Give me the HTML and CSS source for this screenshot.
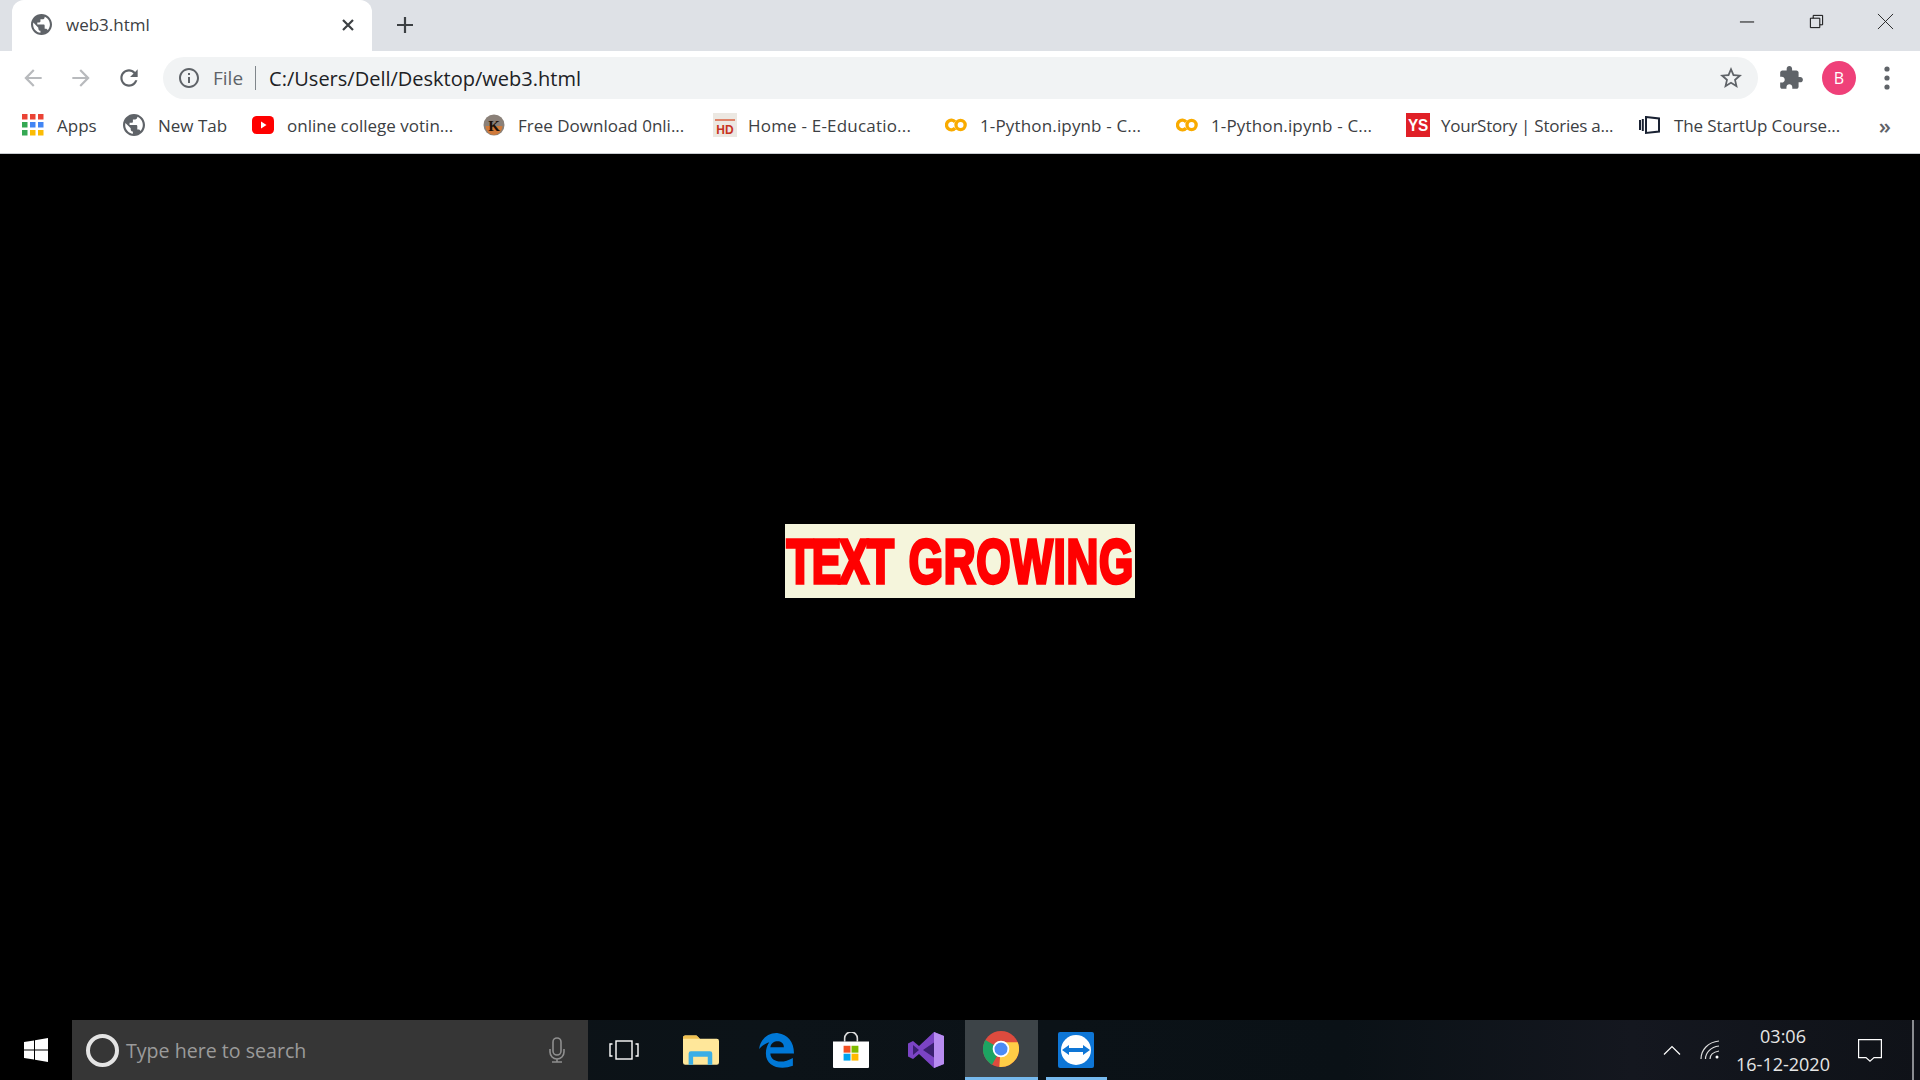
FILE: index.html
```html
<!DOCTYPE html>
<html lang="en">
<head>
    <meta charset="UTF-8">
    <title>web3.html</title>
    <link rel="stylesheet" href="styles.css">
</head>
<body>
    <svg class="defs" width="0" height="0">
        <symbol id="globe" viewBox="2 2 20 20"><path d="M12 2C6.48 2 2 6.48 2 12s4.48 10 10 10 10-4.48 10-10S17.52 2 12 2zm-1 17.93c-3.95-.49-7-3.85-7-7.93 0-.62.08-1.21.21-1.79L9 15v1c0 1.1.9 2 2 2v1.93zm6.9-2.54c-.26-.81-1-1.39-1.9-1.39h-1v-3c0-.55-.45-1-1-1H8v-2h2c.55 0 1-.45 1-1V7h2c1.1 0 2-.9 2-2v-.41c2.93 1.19 5 4.06 5 7.41 0 2.08-.8 3.97-2.1 5.39z"/></symbol>
        <symbol id="colab" viewBox="0 0 24 14"><path d="M11 3.600A5.300 5.300 0 1 0 11 10.400" fill="none" stroke="#f9ab00" stroke-width="3.600"/><circle cx="17" cy="7" r="5" fill="none" stroke="#f9ab00" stroke-width="3.600"/></symbol>
    </svg>

    <div class="tabstrip">
        <div class="tab">
            <svg class="tab-favicon" fill="#5f6368"><use href="#globe"/></svg>
            <span class="tab-title">web3.html</span>
            <svg class="tab-close" viewBox="0 0 14 14" stroke="#3c4043" stroke-width="2.2"><path d="M2 2l10 10M12 2L2 12"/></svg>
        </div>
        <svg class="newtab" viewBox="0 0 18 18" stroke="#3c4043" stroke-width="2.2"><path d="M9 1v16M1 9h16"/></svg>
        <div class="winbtns">
            <svg class="winbtn" viewBox="0 0 18 18" stroke="#000" fill="none"><path d="M1 9.5h15"/></svg>
            <svg class="winbtn" viewBox="0 0 18 18" stroke="#000" fill="none"><path d="M2.500 5.500h10v10h-10zM5.500 5.500V2.500h10v10h-3"/></svg>
            <svg class="winbtn" viewBox="0 0 18 18" stroke="#222" fill="none"><path d="M1 1l16 16M17 1L1 17"/></svg>
        </div>
    </div>

    <div class="toolbar">
        <div class="toolbtn">
            <svg class="navicon" viewBox="0 0 24 24" fill="#b8babd"><path d="M20 11H7.830l5.590-5.590L12 4l-8 8 8 8 1.410-1.410L7.830 13H20v-2z"/></svg>
        </div>
        <div class="toolbtn">
            <svg class="navicon flip" viewBox="0 0 24 24" fill="#b8babd"><path d="M20 11H7.830l5.590-5.590L12 4l-8 8 8 8 1.410-1.410L7.830 13H20v-2z"/></svg>
        </div>
        <div class="toolbtn">
            <svg class="navicon" viewBox="0 0 24 24" fill="#5f6368"><path d="M17.650 6.350C16.200 4.900 14.210 4 12 4c-4.420 0-7.990 3.580-7.990 8s3.570 8 7.990 8c3.730 0 6.840-2.550 7.730-6h-2.080c-.82 2.330-3.040 4-5.650 4-3.310 0-6-2.690-6-6s2.690-6 6-6c1.660 0 3.140.69 4.220 1.780L13 11h7V4l-2.350 2.350z"/></svg>
        </div>
        <div class="omnibox">
            <svg class="omni-info" viewBox="2 2 20 20" fill="#5f6368"><path d="M11 7h2v2h-2zm0 4h2v6h-2zm1-9C6.480 2 2 6.480 2 12s4.480 10 10 10 10-4.480 10-10S17.520 2 12 2zm0 18c-4.410 0-8-3.590-8-8s3.590-8 8-8 8 3.590 8 8-3.590 8-8 8z"/></svg>
            <span class="omni-file">File</span>
            <span class="omni-sep"></span>
            <span class="omni-url">C:/Users/Dell/Desktop/web3.html</span>
            <svg class="omni-star" viewBox="2 2 20 20" fill="#5f6368"><path d="M22 9.240l-7.190-.62L12 2 9.190 8.630 2 9.240l5.460 4.730L5.820 21 12 17.270 18.180 21l-1.630-7.030L22 9.240zM12 15.400l-3.760 2.270 1-4.280-3.320-2.880 4.380-.38L12 6.100l1.710 4.040 4.380.38-3.320 2.880 1 4.280L12 15.400z"/></svg>
        </div>
        <div class="toolbtn">
            <svg class="navicon" viewBox="0 0 24 24" fill="#5f6368"><path d="M20.500 11H19V7c0-1.100-.9-2-2-2h-4V3.500C13 2.120 11.880 1 10.500 1S8 2.120 8 3.500V5H4c-1.100 0-1.990.9-1.990 2v3.800H3.500c1.490 0 2.700 1.210 2.700 2.700s-1.210 2.700-2.700 2.700H2V20c0 1.100.9 2 2 2h3.800v-1.500c0-1.490 1.210-2.700 2.700-2.700 1.490 0 2.700 1.210 2.700 2.700V22H17c1.100 0 2-.9 2-2v-4h1.500c1.380 0 2.500-1.120 2.500-2.500S21.880 11 20.500 11z"/></svg>
        </div>
        <div class="toolbtn"><span class="avatar">B</span></div>
        <div class="toolbtn">
            <svg class="dots" viewBox="0 0 6 24" fill="#5f6368"><circle cx="3" cy="3" r="2.600"/><circle cx="3" cy="12" r="2.600"/><circle cx="3" cy="21" r="2.600"/></svg>
        </div>
    </div>

    <div class="bookmarks">
        <div class="bm bm-apps">
            <svg class="bm-icon" viewBox="0 0 22 22">
                <rect x="0" y="0" width="5.500" height="5.500" fill="#ea4335"/><rect x="8" y="0" width="5.500" height="5.500" fill="#ea4335"/><rect x="16" y="0" width="5.500" height="5.500" fill="#ea4335"/>
                <rect x="0" y="8" width="5.500" height="5.500" fill="#34a853"/><rect x="8" y="8" width="5.500" height="5.500" fill="#4285f4"/><rect x="16" y="8" width="5.500" height="5.500" fill="#4285f4"/>
                <rect x="0" y="16" width="5.500" height="5.500" fill="#34a853"/><rect x="8" y="16" width="5.500" height="5.500" fill="#fbbc05"/><rect x="16" y="16" width="5.500" height="5.500" fill="#fbbc05"/>
            </svg>
            <span>Apps</span>
        </div>
        <div class="bm bm-newtab">
            <svg class="bm-icon" fill="#5f6368"><use href="#globe"/></svg>
            <span>New Tab</span>
        </div>
        <div class="bm bm-yt">
            <svg class="bm-icon" viewBox="0 0 22 18"><rect width="22" height="18" rx="4.500" fill="#f00"/><path d="M9 5.500v7l5.500-3.500z" fill="#fff"/></svg>
            <span>online college votin...</span>
        </div>
        <div class="bm bm-free">
            <svg class="bm-icon" viewBox="0 0 22 22"><circle cx="11" cy="11" r="10.500" fill="#8a8078"/><path d="M2.500 12a8.500 9 0 0 0 17 0z" fill="#d07a3a"/><text x="11" y="17" class="bm-k">K</text></svg>
            <span>Free Download 0nli...</span>
        </div>
        <div class="bm bm-home">
            <svg class="bm-icon bm-square" viewBox="0 0 24 24"><rect width="24" height="24" fill="#ece8e2"/><rect x="2" y="6" width="20" height="2" fill="#e0846a"/><text x="12" y="21" class="bm-hd">HD</text></svg>
            <span>Home - E-Educatio...</span>
        </div>
        <div class="bm bm-co1">
            <svg class="bm-icon bm-colab"><use href="#colab"/></svg>
            <span>1-Python.ipynb - C...</span>
        </div>
        <div class="bm bm-co2">
            <svg class="bm-icon bm-colab"><use href="#colab"/></svg>
            <span>1-Python.ipynb - C...</span>
        </div>
        <div class="bm bm-ys">
            <svg class="bm-icon bm-square" viewBox="0 0 24 24"><rect width="24" height="24" fill="#e02027"/><text x="12" y="18" class="bm-ystext" textLength="20" lengthAdjust="spacingAndGlyphs">YS</text></svg>
            <span>YourStory | Stories a...</span>
        </div>
        <div class="bm bm-startup">
            <svg class="bm-icon" viewBox="0 0 22 22" fill="none" stroke="#1a2233" stroke-width="2"><path d="M7 3l13 1.500v13L7 19zM3.800 5v12M1 6v10"/></svg>
            <span>The StartUp Course...</span>
        </div>
        <span class="bm-more">»</span>
    </div>

    <main class="page">
        <div class="growbox"><span class="growtext"><span class="grow-a">TEXT</span> <span class="grow-b">GROWING</span></span></div>
    </main>

    <div class="taskbar">
        <div class="startbtn">
            <svg class="winlogo" viewBox="0 0 24 24" fill="#fff"><path d="M0 4l10-1.500V11.500H0zM11 2.300L24 0v11.500H11zM0 12.500h10v9L0 20zM11 12.500h13V24l-13-2.200z"/></svg>
        </div>
        <div class="searchbox">
            <span class="cortana"></span>
            <span class="search-hint">Type here to search</span>
            <svg class="mic" viewBox="0 0 18 26" fill="none" stroke="#8f8f8f" stroke-width="1.600"><rect x="5" y="1" width="8" height="17" rx="4"/><path d="M2 12v3a7 7 0 0 0 14 0v-3M9 22v3M4 25h10"/></svg>
        </div>
        <div class="taskitem taskitem-view">
            <svg class="ti-taskview" viewBox="0 0 30 20" fill="none" stroke="#fff" stroke-width="1.400"><rect x="7" y="1" width="16" height="18"/><path d="M3.500 4H1v12h2.500M26.500 4H29v12h-2.500"/></svg>
        </div>
        <div class="taskitem">
            <svg class="ti-icon" viewBox="0 0 32 26">
                <path d="M0 2a2 2 0 0 1 2-2h10l3 3h15a2 2 0 0 1 2 2v19a2 2 0 0 1-2 2H2a2 2 0 0 1-2-2z" fill="#ffe79a"/>
                <path d="M0 2a2 2 0 0 1 2-2h10l3 3H0z" fill="#f0c050"/>
                <path d="M5 26v-10a2 2 0 0 1 2-2h17a2 2 0 0 1 2 2v10h-4v-7h-13v7z" fill="#3aaee6"/>
            </svg>
        </div>
        <div class="taskitem">
            <svg class="ti-icon" viewBox="0 0 32 32"><path d="M1 15C2 6 10 0 18 1c8 1 14 7 14 18H11c0 7 10 10 20 4v7c-11 4-24 1-24-11 0-4 1-7 3-10-4 1-7 4-9 6zM11 13.500h12c0-7-11-7-12 0z" fill="#0078d7"/></svg>
        </div>
        <div class="taskitem">
            <svg class="ti-icon" viewBox="0 0 34 34">
                <path d="M11 9V6a6 6 0 0 1 12 0v3" fill="none" stroke="#ddd" stroke-width="1.500"/>
                <path d="M0 9h34v24a1 1 0 0 1-1 1H1a1 1 0 0 1-1-1z" fill="#fff"/>
                <rect x="10" y="13" width="6.500" height="6.500" fill="#f25022"/><rect x="17.500" y="13" width="6.500" height="6.500" fill="#7fba00"/>
                <rect x="10" y="20.500" width="6.500" height="6.500" fill="#00a4ef"/><rect x="17.500" y="20.500" width="6.500" height="6.500" fill="#ffb900"/>
            </svg>
        </div>
        <div class="taskitem">
            <svg class="ti-icon" viewBox="0 0 36 36">
                <path d="M26 0l10 4v28l-10 4-15-14-6 5-5-2.500V11.500L5 9l6 5z" fill="#7b44c4"/>
                <path d="M26 0l10 4v28l-10 4z" fill="#b88cf0"/>
                <path d="M5 13l6 5-6 5zM26 10.500v15L15 18z" fill="#3a1f70"/>
            </svg>
        </div>
        <div class="taskitem taskitem-active">
            <svg class="ti-icon" viewBox="0 0 32 32">
                <circle cx="16" cy="16" r="16" fill="#dd4b3e"/>
                <path d="M16 16L8 30A16 16 0 0 1 2.100 8z" fill="#1da462"/>
                <path d="M16 10h14.900A16 16 0 0 1 16 32h-1.500z" fill="#ffcd46"/>
                <circle cx="16" cy="16" r="7.400" fill="#fff"/>
                <circle cx="16" cy="16" r="5.800" fill="#4c8bf5"/>
            </svg>
        </div>
        <div class="taskitem taskitem-open">
            <svg class="ti-icon" viewBox="0 0 36 36">
                <rect width="36" height="36" rx="2" fill="#0e76d6"/>
                <circle cx="18" cy="18" r="15" fill="#fff"/>
                <path d="M4 18l7-5v3h14v-3l7 5-7 5v-3H11v3z" fill="#0e76d6"/>
            </svg>
        </div>
        <div class="tray">
            <svg class="tray-caret" viewBox="0 0 18 10" fill="none" stroke="#fff" stroke-width="1.200"><path d="M1 9.500l8-8 8 8"/></svg>
            <svg class="tray-wifi" viewBox="0 0 20 20" fill="none" stroke="#ddd" stroke-width="1.200"><path d="M1 19C1 10 8 2 19 1M5.500 19c0-6 5-12 13.500-13M10 19c0-4 3-7 9-8"/><circle cx="17" cy="17" r="1.500" fill="#fff" stroke="none"/></svg>
            <div class="clock"><span>03:06</span><span>16-12-2020</span></div>
            <svg class="tray-notify" viewBox="0 0 24 23" fill="none" stroke="#fff" stroke-width="1.200"><path d="M.6.6h22.800v18H16l-4 3.500-4-3.500H.6z"/></svg>
            <span class="tray-edge"></span>
        </div>
    </div>
</body>
</html>
```

FILE: styles.css
```css
* {
    box-sizing: border-box;
}
html, body {
    margin: 0;
    height: 100%;
}
body {
    display: flex;
    flex-direction: column;
    height: 1080px;
    overflow: hidden;
    background: #000;
    font-family: "Open Sans", "Noto Sans", sans-serif;
    color: #3c4043;
}
svg {
    display: block;
    flex: none;
}
.defs {
    position: absolute;
}

/* tab strip */
.tabstrip {
    display: flex;
    align-items: center;
    height: 51px;
    padding-left: 12px;
    background: #dee1e6;
}
.tab {
    display: flex;
    align-items: center;
    width: 360px;
    height: 51px;
    padding: 0 17px 2px 19px;
    background: #fff;
    border-radius: 12px 12px 0 0;
}
.tab-favicon {
    width: 21px;
    height: 21px;
}
.tab-title {
    flex: 1;
    margin-left: 14px;
    font-size: 17px;
}
.tab-close {
    width: 14px;
    height: 14px;
}
.newtab {
    width: 18px;
    height: 18px;
    margin: 0 0 2px 24px;
}
.winbtns {
    display: flex;
    gap: 52px;
    margin-left: auto;
    margin-right: 26px;
    margin-bottom: 8px;
}
.winbtn {
    width: 17px;
    height: 17px;
}

/* toolbar */
.toolbar {
    display: flex;
    align-items: center;
    height: 54px;
    padding: 0 9px;
    background: #fff;
}
.toolbtn {
    display: flex;
    align-items: center;
    justify-content: center;
    width: 48px;
}
.navicon {
    width: 26px;
    height: 26px;
}
.flip {
    transform: scaleX(-1);
}
.dots {
    width: 6px;
    height: 24px;
}
.avatar {
    display: flex;
    align-items: center;
    justify-content: center;
    width: 34px;
    height: 34px;
    border-radius: 50%;
    background: #ef4079;
    color: #fff;
    font-size: 16px;
}
.omnibox {
    flex: 1;
    display: flex;
    align-items: center;
    height: 42px;
    margin: 0 9px 0 10px;
    padding: 0 16px 0 16px;
    border-radius: 21px;
    background: #f1f3f4;
}
.omni-info {
    width: 20px;
    height: 20px;
}
.omni-file {
    margin-left: 14px;
    font-size: 19px;
    color: #5f6368;
}
.omni-sep {
    width: 1px;
    height: 24px;
    margin: 0 13px 0 12px;
    background: #80868b;
}
.omni-url {
    flex: 1;
    font-size: 20px;
    color: #202124;
}
.omni-star {
    width: 22px;
    height: 22px;
}

/* bookmarks */
.bookmarks {
    display: flex;
    align-items: center;
    height: 49px;
    padding: 0 29px 8px 22px;
    background: #fff;
    border-bottom: 1px solid #c9ccd0;
    font-size: 17px;
}
.bm {
    display: flex;
    align-items: center;
    gap: 13px;
    white-space: nowrap;
}
.bm-icon {
    width: 22px;
    height: 22px;
}
.bm-colab {
    height: 14px;
}
.bm-square {
    width: 24px;
    height: 24px;
    margin-right: -2px;
}
.bm-apps { width: 101px; }
.bm-newtab { width: 129px; }
.bm-yt { width: 231px; }
.bm-free { width: 230px; }
.bm-home { width: 232px; letter-spacing: .2px; }
.bm-co1 { width: 231px; letter-spacing: .15px; }
.bm-co2 { width: 230px; letter-spacing: .15px; }
.bm-ys { width: 233px; letter-spacing: -.25px; }
.bm-startup { flex: 1; letter-spacing: -.1px; }
.bm-more {
    font-size: 22px;
    font-weight: 600;
    line-height: 1;
    color: #5f6368;
}
.bm-k {
    font: bold 15px "Liberation Serif", serif;
    text-anchor: middle;
    fill: #1c1208;
}
.bm-hd {
    font: bold 12px "Liberation Sans", sans-serif;
    text-anchor: middle;
    fill: #c8321e;
}
.bm-ystext {
    font: bold 17px "Liberation Sans", sans-serif;
    text-anchor: middle;
    fill: #fff;
}

/* page */
.page {
    flex: 1;
    display: flex;
    align-items: center;
    justify-content: center;
    padding-bottom: 52px;
    background: #000;
}
.growbox {
    display: flex;
    align-items: center;
    justify-content: center;
    width: 350px;
    height: 74px;
    background: #f5f5dc;
}
.growtext {
    font: bold 63px "Liberation Sans", sans-serif;
    color: #f00;
    white-space: nowrap;
    word-spacing: 6px;
    -webkit-text-stroke: 3.5px #f00;
    transform: scaleX(0.7);
}
.grow-a {
    letter-spacing: -2.5px;
}
.grow-b {
    letter-spacing: 1px;
}

/* taskbar */
.taskbar {
    display: flex;
    height: 60px;
    background: linear-gradient(90deg, #0c1014 0%, #0c1318 40%, #0a1116 70%, #14171f 85%, #0f1218 100%);
    color: #fff;
}
.startbtn {
    display: flex;
    align-items: center;
    justify-content: center;
    width: 72px;
    background: #000;
}
.winlogo {
    width: 24px;
    height: 24px;
}
.searchbox {
    display: flex;
    align-items: center;
    width: 516px;
    padding: 0 22px 0 14px;
    background: #363636;
}
.cortana {
    width: 33px;
    height: 33px;
    border: 4px solid #e4e4e4;
    border-radius: 50%;
}
.search-hint {
    flex: 1;
    margin-left: 7px;
    font-size: 19.6px;
    color: #9b9b9b;
}
.mic {
    width: 18px;
    height: 26px;
}
.taskitem {
    display: flex;
    align-items: center;
    justify-content: center;
    width: 75px;
}
.taskitem-view {
    padding-right: 3px;
}
.ti-taskview {
    width: 30px;
    height: 20px;
}
.ti-icon {
    width: 36px;
    height: 36px;
}
.taskitem-active {
    width: 73px;
    margin-left: 2px;
    padding-right: 2px;
    background: #3d4448;
    border-bottom: 3px solid #76b9ed;
}
.taskitem-open {
    position: relative;
}
.taskitem-open::after {
    content: "";
    position: absolute;
    left: 8px;
    right: 6px;
    bottom: 0;
    height: 3px;
    background: #76b9ed;
}
.tray {
    flex: 1;
    display: flex;
    align-items: center;
    padding-left: 550px;
}
.tray-caret {
    width: 18px;
    height: 10px;
}
.tray-wifi {
    width: 20px;
    height: 20px;
    margin-left: 19px;
}
.clock {
    display: flex;
    flex-direction: column;
    align-items: center;
    gap: 4px;
    width: 100px;
    margin-left: 13px;
    font-size: 18px;
    line-height: 24px;
    color: #e6e6e6;
}
.tray-notify {
    width: 24px;
    height: 23px;
    margin-left: 25px;
}
.tray-edge {
    align-self: stretch;
    width: 2px;
    margin-left: 30px;
    background: #8a8d91;
}
```
